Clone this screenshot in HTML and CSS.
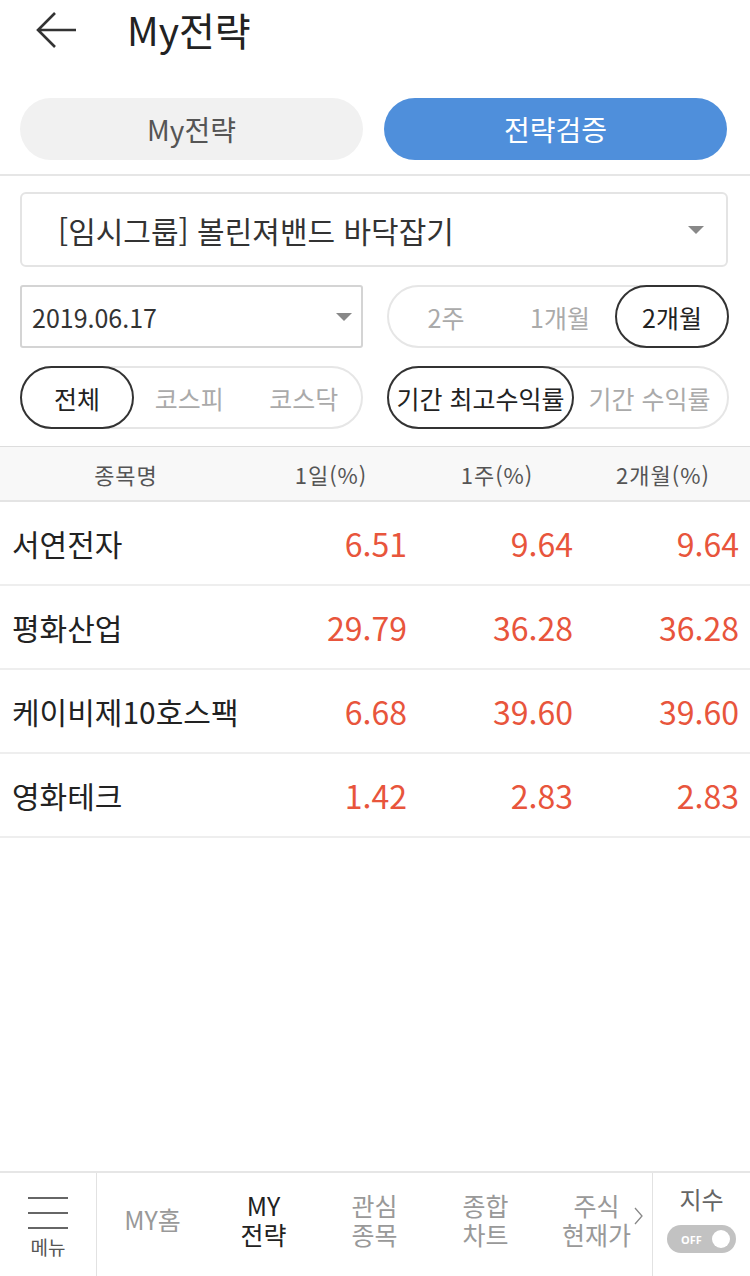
FILE: index.html
```html
<!DOCTYPE html>
<html lang="ko">
<head>
  <meta charset="UTF-8">
  <meta name="viewport" content="width=device-width, initial-scale=1">
  <title>My전략</title>
  <link rel="stylesheet" href="styles.css">
</head>
<body>
  <div class="page">
    <header class="topbar">
      <svg class="back" width="40" height="40" viewBox="0 0 40 40">
        <path d="M2 18 H40 M19 1 L2 18 L19 35" fill="none" stroke="#333" stroke-width="2.6"/>
      </svg>
      <h1>My전략</h1>
    </header>

    <div class="tabs">
      <div class="tab">My전략</div>
      <div class="tab active">전략검증</div>
    </div>

    <div class="filters">
      <div class="group-select">
        <span>[임시그룹] 볼린져밴드 바닥잡기</span>
        <i class="caret"></i>
      </div>

      <div class="filter-row">
        <div class="date-select">
          <span>2019.06.17</span>
          <i class="caret"></i>
        </div>
        <div class="seg">
          <span>2주</span>
          <span>1개월</span>
          <span class="on">2개월</span>
        </div>
      </div>

      <div class="filter-row">
        <div class="seg market">
          <span class="on">전체</span>
          <span>코스피</span>
          <span>코스닥</span>
        </div>
        <div class="seg sort">
          <span class="on">기간 최고수익률</span>
          <span>기간 수익률</span>
        </div>
      </div>
    </div>

    <div class="table">
      <div class="thead">
        <div class="name">종목명</div>
        <div>1일(%)</div>
        <div>1주(%)</div>
        <div>2개월(%)</div>
      </div>
      <div class="row">
        <div class="name">서연전자</div>
        <div class="num">6.51</div>
        <div class="num">9.64</div>
        <div class="num">9.64</div>
      </div>
      <div class="row">
        <div class="name">평화산업</div>
        <div class="num">29.79</div>
        <div class="num">36.28</div>
        <div class="num">36.28</div>
      </div>
      <div class="row">
        <div class="name">케이비제10호스팩</div>
        <div class="num">6.68</div>
        <div class="num">39.60</div>
        <div class="num">39.60</div>
      </div>
      <div class="row">
        <div class="name">영화테크</div>
        <div class="num">1.42</div>
        <div class="num">2.83</div>
        <div class="num">2.83</div>
      </div>
    </div>

    <nav class="bottom-nav">
      <div class="menu">
        <div class="burger"><i></i><i></i><i></i></div>
        <span>메뉴</span>
      </div>
      <div class="nav-items">
        <div class="item">MY홈</div>
        <div class="item current">MY<br>전략</div>
        <div class="item">관심<br>종목</div>
        <div class="item">종합<br>차트</div>
        <div class="item">주식<br>현재가</div>
        <svg class="more" width="10" height="18" viewBox="0 0 10 18">
          <path d="M1 1 L8 9 L1 17" fill="none" stroke="#888" stroke-width="1.3"/>
        </svg>
      </div>
      <div class="index">
        <span>지수</span>
        <div class="toggle"><b>OFF</b><i></i></div>
      </div>
    </nav>
  </div>
</body>
</html>
```

FILE: styles.css
```css
* {
  box-sizing: border-box;
}
body {
  margin: 0;
  font-family: "Noto Sans CJK KR", "Noto Sans", sans-serif;
  color: #333;
  background: #fff;
}
.page {
  width: 750px;
  height: 1276px;
  display: flex;
  flex-direction: column;
  overflow: hidden;
}

/* header */
.topbar {
  height: 60px;
  display: flex;
  align-items: center;
  padding-left: 36px;
}
.back {
  margin-top: 4px;
}
.topbar h1 {
  margin: 0 0 2px 51px;
  font-size: 39px;
  font-weight: 400;
  color: #222;
}

/* tabs */
.tabs {
  display: grid;
  grid-template-columns: 343px 343px;
  gap: 21px;
  padding: 38px 0 14px 20px;
  border-bottom: 2px solid #e6e6e6;
}
.tab {
  height: 62px;
  border-radius: 31px;
  background: #f1f1f1;
  color: #555;
  font-size: 28px;
  display: flex;
  align-items: center;
  justify-content: center;
}
.tab.active {
  background: #4f8fdb;
  color: #fff;
}

/* filters */
.filters {
  padding: 16px 22px 17px 20px;
  display: flex;
  flex-direction: column;
  gap: 18px;
}
.group-select {
  height: 75px;
  border: 2px solid #e4e4e4;
  border-radius: 6px;
  display: flex;
  align-items: center;
  justify-content: space-between;
  padding: 0 22px 0 36px;
  font-size: 30px;
  color: #333;
}
.caret {
  width: 0;
  height: 0;
  border-left: 8px solid transparent;
  border-right: 8px solid transparent;
  border-top: 8px solid #888;
}
.filter-row {
  display: grid;
  grid-template-columns: 343px 342px;
  gap: 24px;
  height: 63px;
}
.date-select {
  border: 2px solid #d4d4d4;
  border-radius: 3px;
  display: flex;
  align-items: center;
  justify-content: space-between;
  padding: 0 9px 0 10px;
  font-size: 25px;
  color: #333;
}
.seg {
  border: 2px solid #e6e6e6;
  border-radius: 32px;
  display: flex;
  align-items: stretch;
  font-size: 25px;
  color: #aaa;
}
.seg span {
  flex: 1;
  display: flex;
  align-items: center;
  justify-content: center;
  margin: -2px;
}
.seg span.on {
  border: 2px solid #333;
  border-radius: 32px;
  color: #222;
}
.seg span:nth-child(3).on {
  flex: 0 0 114px;
}
.market span.on {
  flex: 0 0 114px;
}
.sort span.on {
  flex: 0 0 187px;
}

/* table */
.table {
  border-top: 1px solid #ddd;
}
.thead,
.row {
  display: grid;
  grid-template-columns: 252px 166px 166px 166px;
}
.thead {
  height: 55px;
  background: #f8f8f8;
  border-bottom: 2px solid #e4e4e4;
  font-size: 22px;
  letter-spacing: 1px;
  color: #555;
  align-items: center;
  text-align: center;
}
.thead div {
  padding-right: 8px;
}
.thead .name {
  padding-right: 0;
}
.row {
  height: 84px;
  border-bottom: 2px solid #eee;
  align-items: center;
  font-size: 32px;
}
.row .name {
  padding-left: 12px;
  color: #222;
  font-size: 30px;
}
.row .num {
  text-align: right;
  padding-right: 11px;
  color: #e8553c;
}

/* bottom navigation */
.bottom-nav {
  margin-top: auto;
  height: 105px;
  border-top: 2px solid #e6e6e6;
  display: flex;
}
.menu {
  width: 97px;
  border-right: 1px solid #e2e2e2;
  display: flex;
  flex-direction: column;
  align-items: center;
  padding-top: 24px;
  color: #555;
  font-size: 19px;
  line-height: 24px;
}
.burger {
  display: flex;
  flex-direction: column;
  gap: 13px;
  margin-bottom: 6px;
}
.burger i {
  width: 40px;
  height: 2px;
  background: #666;
}
.nav-items {
  flex: 1;
  display: flex;
  align-items: center;
  position: relative;
  padding-bottom: 10px;
}
.item {
  flex: 1;
  text-align: center;
  font-size: 25px;
  line-height: 29px;
  color: #999;
}
.item.current {
  color: #222;
}
.more {
  position: absolute;
  right: 8px;
  top: 34px;
}
.index {
  width: 98px;
  border-left: 1px solid #e2e2e2;
  display: flex;
  flex-direction: column;
  align-items: center;
  padding-top: 10px;
  font-size: 24px;
  line-height: 32px;
  color: #666;
}
.toggle {
  margin-top: 10px;
  width: 69px;
  height: 28px;
  border-radius: 14px;
  background: #c2c2c2;
  display: flex;
  align-items: center;
  justify-content: space-between;
  padding: 0 6px 0 14px;
}
.toggle b {
  color: #fff;
  font-size: 11px;
  line-height: 11px;
  font-weight: 700;
  font-family: "Noto Sans", sans-serif;
}
.toggle i {
  width: 18px;
  height: 18px;
  border-radius: 50%;
  background: #fff;
}
```
